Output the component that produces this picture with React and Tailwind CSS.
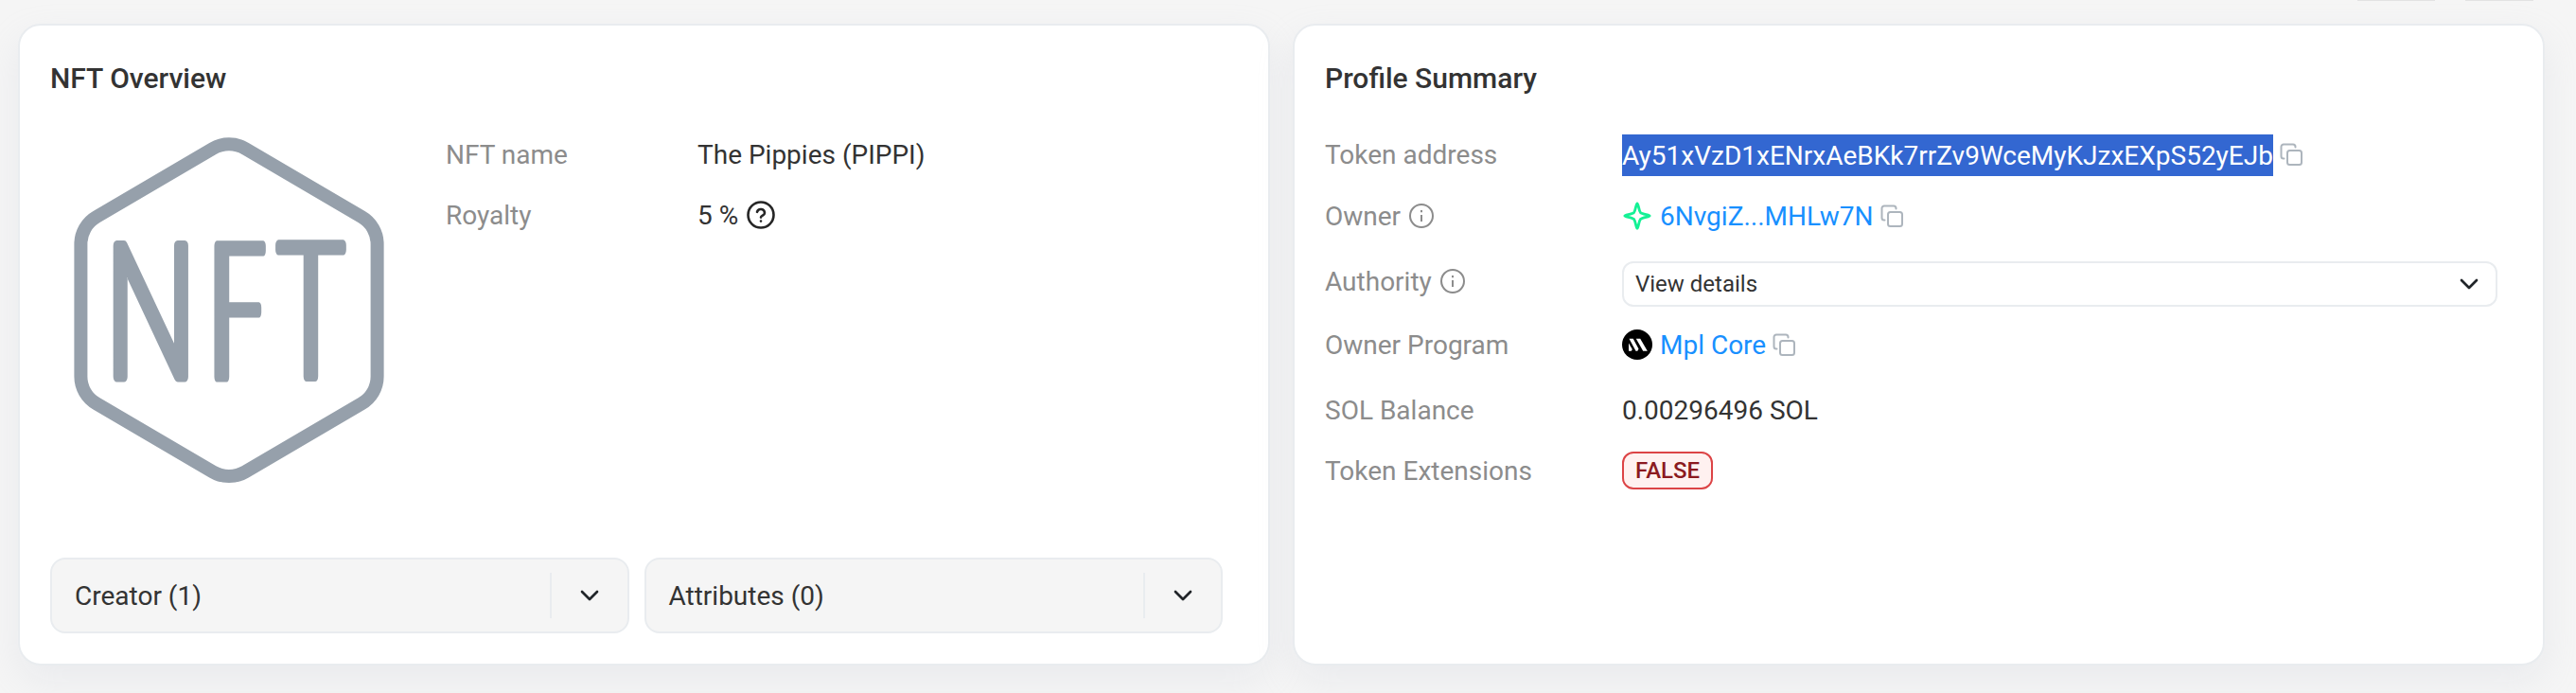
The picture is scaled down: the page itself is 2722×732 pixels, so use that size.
import { ChevronDown } from "lucide-react";

function InfoIcon() {
  return (
    <svg className="size-[26px] shrink-0" viewBox="0 0 26 26" fill="none" stroke="#8c8c8c" strokeWidth="2">
      <circle cx="13" cy="13" r="12" />
      <path d="M13 12v7M13 7v2.2" />
    </svg>
  );
}

function HelpIcon() {
  return (
    <svg
      className="size-[30px] shrink-0"
      viewBox="0 0 30 30"
      fill="none"
      stroke="#262626"
      strokeWidth="2.6"
      strokeLinecap="round"
      strokeLinejoin="round"
    >
      <circle cx="15" cy="15" r="13.5" />
      <path d="M11 11.800a4.100 4.100 0 0 1 8 1.200c0 2.500-4 2.600-4 4.600" />
      <path d="M15 21.500v.1" />
    </svg>
  );
}

function CopyIcon() {
  return (
    <svg
      className="size-6 shrink-0"
      viewBox="0 0 24 24"
      fill="none"
      stroke="#adb5bd"
      strokeWidth="2"
      strokeLinecap="round"
    >
      <rect x="8" y="8" width="15" height="15" rx="2.5" />
      <path d="M4.500 16.500h-.5a2.500 2.500 0 0 1-2.500-2.500V4a2.500 2.500 0 0 1 2.500-2.500h10a2.500 2.500 0 0 1 2.500 2.500v.5" />
    </svg>
  );
}

function SparkIcon() {
  return (
    <svg
      className="size-8 shrink-0"
      viewBox="0 0 32 32"
      fill="none"
      stroke="#14f195"
      strokeWidth="2.8"
      strokeLinejoin="round"
    >
      <path d="M16 2.800C17.200 2.800 17.600 10.200 19.400 12.400C21.400 14.400 29.200 14.800 29.200 16C29.200 17.200 21.400 17.600 19.400 19.600C17.600 21.800 17.200 29.200 16 29.200C14.800 29.200 14.400 21.800 12.600 19.600C10.600 17.600 2.800 17.200 2.800 16C2.800 14.800 10.600 14.400 12.600 12.400C14.400 10.200 14.800 2.800 16 2.800Z" />
    </svg>
  );
}

function MetaplexIcon() {
  return (
    <svg className="size-8 shrink-0" viewBox="0 0 32 32">
      <circle cx="16" cy="16" r="16" fill="#000" />
      <g fill="#fff">
        <path d="M7.500 9.700h4.200l5.800 10.800-1.200 2.200h-1.800z" />
        <path d="M14.800 9.700h4.400l7.600 13h-4.600z" />
        <path d="M7 14.500l3.800 6.500-1 1.700H7z" />
      </g>
    </svg>
  );
}

// widens the upright strokes of a condensed letter
function Widen({ id, radius }) {
  return (
    <filter id={id} x="-20%" y="-20%" width="140%" height="140%" colorInterpolationFilters="sRGB">
      <feMorphology operator="dilate" radius={radius} />
    </filter>
  );
}

function NftLogo() {
  return (
    <svg className="h-[370px] w-[332px] shrink-0" viewBox="76 143 332 370">
      <defs>
        <Widen id="widen-n" radius="2 0" />
        <Widen id="widen-f" radius="4 0" />
        <Widen id="widen-t" radius="3 0" />
      </defs>
      <path
        d="M224.800 157A34 34 0 0 1 259.200 157L382 229A33 33 0 0 1 398.600 257.800V397.600A33 33 0 0 1 382 426.400L259.200 498.400A34 34 0 0 1 224.800 498.400L102 426.400A33 33 0 0 1 85.400 397.600V257.800A33 33 0 0 1 102 229Z"
        fill="none"
        stroke="#96a0ab"
        strokeWidth="14"
      />
      <g
        fill="#96a0ab"
        stroke="#96a0ab"
        strokeWidth="11"
        strokeLinejoin="round"
        fontFamily="Roboto, sans-serif"
        fontWeight="100"
        fontSize="195"
      >
        <g filter="url(#widen-n)">
          <text transform="translate(112.4 397.5) scale(0.679 1)">N</text>
        </g>
        <g filter="url(#widen-f)">
          <text transform="translate(224 397.5) scale(0.478 1)">F</text>
        </g>
        <g filter="url(#widen-t)">
          <text transform="translate(294.3 397.5) scale(0.587 1)">T</text>
        </g>
      </g>
    </svg>
  );
}

function Card({ title, children }) {
  return (
    <section className="flex h-[678px] w-[1323px] flex-col rounded-3xl border-2 border-[#e9ecef] bg-white px-8 pt-8 shadow-[0_16px_38px_rgba(189,197,209,0.2)]">
      <h2 className="h-12 text-[30px] leading-[48px] font-medium">{title}</h2>
      {children}
    </section>
  );
}

function Dropdown({ label }) {
  return (
    <button className="flex h-20 flex-1 items-center rounded-2xl border-2 border-[#e9ecef] bg-[#f5f5f5] pl-6 text-left">
      <span className="flex-1 pt-0.5">{label}</span>
      <span className="flex h-12 w-[82px] items-center justify-center border-l-2 border-[#e9ecef]">
        <ChevronDown size={32} strokeWidth={2} color="#212529" />
      </span>
    </button>
  );
}

function Row({ label, info, className, children }) {
  return (
    <div className={`flex items-center ${className}`}>
      <div className="flex w-[314px] shrink-0 items-center gap-[9px] text-[#8c8c8c]">
        <span className="pt-0.5">{label}</span>
        {info && <InfoIcon />}
      </div>
      {children}
    </div>
  );
}

export default function App() {
  return (
    <main className="h-[732px] w-[2722px] overflow-hidden bg-[#f5f5f5] font-['Roboto',sans-serif] text-[28px] leading-[44px] text-[#333333]">
      <div className="flex h-[25px] items-start justify-end gap-8 pr-[45px]">
        <div className="h-px w-[82px] bg-[#e2e2e2]" />
        <div className="h-px w-[72px] bg-[#e2e2e2]" />
      </div>

      <div className="flex gap-6 pl-[19px]">
        <Card title="NFT Overview">
          <div className="flex pt-6">
            <div className="ml-[23px] pt-3">
              <NftLogo />
            </div>
            <div className="ml-[63px]">
              <div className="flex h-16 items-center">
                <span className="w-[266px] pt-0.5 text-[#8c8c8c]">NFT name</span>
                <span className="pt-0.5">The Pippies (PIPPI)</span>
              </div>
              <div className="flex h-16 items-center">
                <span className="w-[266px] pt-0.5 text-[#8c8c8c]">Royalty</span>
                <span className="mr-[9px] pt-0.5">5 %</span>
                <HelpIcon />
              </div>
            </div>
          </div>
          <div className="mt-auto mr-4 mb-8 flex gap-4">
            <Dropdown label="Creator (1)" />
            <Dropdown label="Attributes (0)" />
          </div>
        </Card>

        <Card title="Profile Summary">
          <div className="pt-6">
            <Row label="Token address" className="h-16">
              <span className="mt-0.5 bg-[#3367d1] pt-0.5 leading-[42px] text-white">
                Ay51xVzD1xENrxAeBKk7rrZv9WceMyKJzxEXpS52yEJb
              </span>
              <span className="ml-[7px]">
                <CopyIcon />
              </span>
            </Row>
            <Row label="Owner" info className="h-[66px]">
              <SparkIcon />
              <a className="mr-[7px] ml-2 pt-0.5 text-[#1890ff]">6NvgiZ...MHLw7N</a>
              <CopyIcon />
            </Row>
            <Row label="Authority" info className="h-[72px]">
              <button className="mt-1.5 flex h-12 w-[925px] items-center justify-between rounded-xl border-2 border-[#e9ecef] px-3 text-2xl">
                View details
                <ChevronDown size={32} strokeWidth={2} color="#212529" />
              </button>
            </Row>
            <Row label="Owner Program" className="h-[62px]">
              <MetaplexIcon />
              <a className="mr-[7px] ml-2 pt-0.5 text-[#1890ff]">Mpl Core</a>
              <CopyIcon />
            </Row>
            <Row label="SOL Balance" className="h-[76px]">
              <span className="pt-0.5">0.00296496 SOL</span>
            </Row>
            <Row label="Token Extensions" className="h-[52px]">
              <span className="flex h-10 items-center rounded-xl border-2 border-[#dc4446] bg-[#fff1f0] px-3 text-2xl font-medium text-[#8b1a20]">
                FALSE
              </span>
            </Row>
          </div>
        </Card>
      </div>
    </main>
  );
}
